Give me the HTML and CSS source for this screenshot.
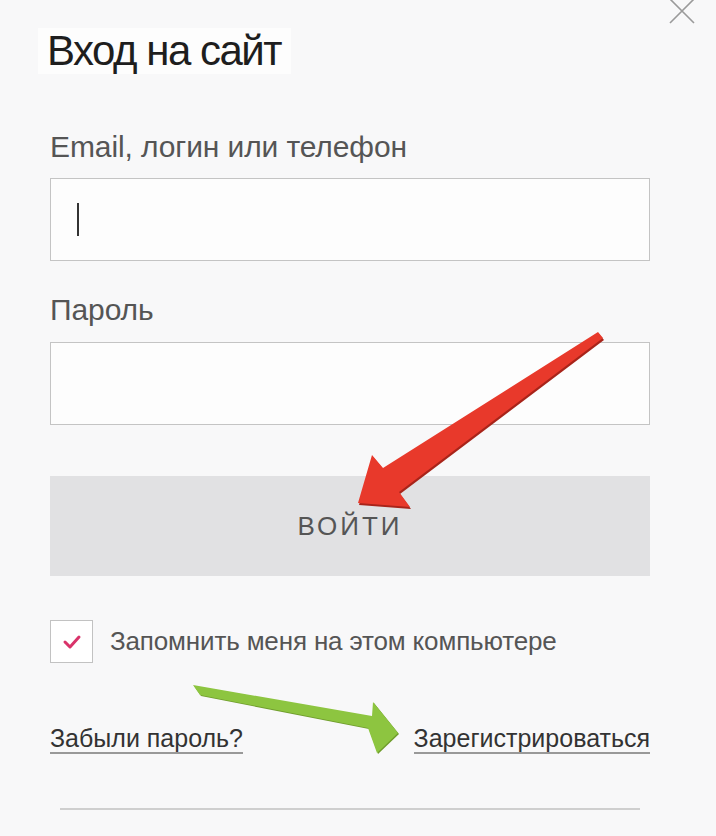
FILE: index.html
```html
<!DOCTYPE html>
<html lang="ru">

<head>
    <meta charset="UTF-8">
    <meta name="viewport" content="width=device-width, initial-scale=1.0">
    <title>Вход на сайт</title>
    <link rel="stylesheet" href="styles.css">
</head>

<body>
    <div class="panel">
        <button class="close" type="button" aria-label="Закрыть">
            <svg width="28" height="28" viewBox="0 0 28 28">
                <path d="M2 2 L26 26 M26 2 L2 26" stroke="#9a9a9a" stroke-width="1.6" fill="none" />
            </svg>
        </button>

        <h1 class="title">Вход на сайт</h1>

        <form class="form" onsubmit="return false;">
            <label class="field-label label-login">Email, логин или телефон</label>
            <div class="field"><span class="caret"></span></div>

            <label class="field-label label-pass">Пароль</label>
            <div class="field"></div>

            <button class="submit" type="submit">ВОЙТИ</button>

            <div class="remember">
                <span class="checkbox">
                    <svg width="20" height="16" viewBox="0 0 20 16">
                        <path d="M3 8 L8 13 L17 3" stroke="#d9336a" stroke-width="3" fill="none"
                            stroke-linecap="round" stroke-linejoin="round" />
                    </svg>
                </span>
                <span class="remember-text">Запомнить меня на этом компьютере</span>
            </div>

            <div class="links">
                <a href="#" class="link">Забыли пароль?</a>
                <a href="#" class="link">Зарегистрироваться</a>
            </div>

            <div class="divider"></div>
        </form>

        <!-- annotation arrows drawn over the form -->
        <svg class="arrows" width="716" height="836" viewBox="0 0 716 836">
            <polygon points="598,332 383,468 372,455 358,503 410,507 399,492 603,338"
                fill="#a8241a" transform="translate(1,2)" />
            <polygon points="598,332 383,468 372,455 358,503 410,507 399,492 603,338" fill="#e8392b" />
            <polygon points="193,685 372,716 373,702 398,733 377,753 368,728 200,695" fill="#6f9c2c"
                transform="translate(1,1)" />
            <polygon points="193,685 372,716 373,702 398,733 377,753 368,728 200,695" fill="#8dc540" />
        </svg>
    </div>
</body>

</html>
```

FILE: styles.css
```css
body {
    margin: 0;
    background-color: #ffffff;
    font-family: "Liberation Sans", Arial, sans-serif;
}

.panel {
    position: relative;
    width: 716px;
    height: 836px;
    box-sizing: border-box;
    padding: 0 66px 0 50px;
    background-color: #f8f8f9;
    overflow: hidden;
}

.close {
    position: absolute;
    top: -3px;
    left: 668px;
    padding: 0;
    border: none;
    background: none;
}

.title {
    display: inline-block;
    margin: 0;
    margin-top: 28px;
    margin-left: -12px;
    padding: 0 10px 0 9px;
    font-size: 42px;
    line-height: 46px;
    font-weight: normal;
    letter-spacing: -1.5px;
    color: #1e1e1e;
    background-color: #fdfdfd;
}

.form {
    width: 600px;
}

.field-label {
    display: block;
    font-size: 30px;
    line-height: 32px;
    letter-spacing: -0.1px;
    color: #555;
}

.label-login {
    margin-top: 57px;
    margin-bottom: 15px;
}

.label-pass {
    margin-top: 33px;
    margin-bottom: 16px;
}

.field {
    height: 83px;
    box-sizing: border-box;
    border: 1px solid #c4c4c4;
    background-color: #fdfdfd;
    display: flex;
    align-items: center;
    padding-left: 26px;
}

.caret {
    width: 2px;
    height: 33px;
    background-color: #333;
}

.submit {
    display: block;
    width: 100%;
    height: 100px;
    margin-top: 51px;
    border: none;
    background-color: #e1e1e3;
    font-family: "Liberation Sans", Arial, sans-serif;
    font-size: 26px;
    letter-spacing: 3px;
    color: #555;
    cursor: pointer;
}

.remember {
    display: flex;
    align-items: center;
    margin-top: 44px;
}

.checkbox {
    width: 43px;
    height: 43px;
    box-sizing: border-box;
    border: 1px solid #c2c2c2;
    background-color: #fff;
    display: flex;
    align-items: center;
    justify-content: center;
}

.remember-text {
    margin-left: 17px;
    font-size: 26px;
    letter-spacing: -0.15px;
    color: #555;
}

.links {
    display: flex;
    justify-content: space-between;
    margin-top: 61px;
}

.link {
    font-size: 25px;
    line-height: 28px;
    color: #333;
    text-decoration: none;
    border-bottom: 2px solid #999;
}

.divider {
    height: 2px;
    margin: 54px 10px 0;
    background-color: #cfcfcf;
}

.arrows {
    position: absolute;
    top: 0;
    left: 0;
    pointer-events: none;
}
```
